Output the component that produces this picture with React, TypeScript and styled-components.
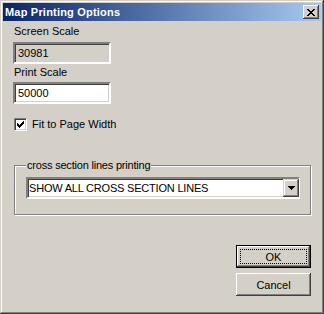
import styled, { createGlobalStyle } from 'styled-components';

const GlobalStyle = createGlobalStyle`
  html, body {
    margin: 0;
    padding: 0;
    background: #d4d0c8;
  }
  body {
    font-family: "Liberation Sans", Arial, sans-serif;
    font-size: 11px;
    color: #000;
  }
`;

const Window = styled.div`
  width: 324px;
  height: 314px;
  box-sizing: border-box;
  padding: 3px;
  background: #d4d0c8;
  display: flex;
  flex-direction: column;
  box-shadow:
    inset -1px -1px 0 #404040,
    inset 1px 1px 0 #d4d0c8,
    inset -2px -2px 0 #808080,
    inset 2px 2px 0 #ffffff;
`;

const TitleBar = styled.div`
  height: 18px;
  display: flex;
  align-items: center;
  justify-content: space-between;
  padding: 0 2px 0 2px;
  background: linear-gradient(to right, #0a246a, #a6caf0);
`;

const Title = styled.span`
  color: #fff;
  font-weight: bold;
  font-size: 11px;
  letter-spacing: 0.2px;
`;

const CloseButton = styled.div`
  width: 16px;
  height: 14px;
  box-sizing: border-box;
  background: #d4d0c8;
  display: flex;
  align-items: center;
  justify-content: center;
  box-shadow:
    inset -1px -1px 0 #404040,
    inset 1px 1px 0 #ffffff,
    inset -2px -2px 0 #808080;
`;

const Body = styled.div`
  flex: 1;
  display: flex;
  flex-direction: column;
  align-items: flex-start;
  padding: 4px 10px 0 10px;
`;

const Label = styled.div<{ $gap?: number }>`
  line-height: 13px;
  margin: ${({ $gap }) => $gap ?? 0}px 0 0 1px;
`;

const EditBox = styled.div<{ $disabled?: boolean; $gap?: number }>`
  width: 98px;
  height: 22px;
  box-sizing: border-box;
  margin-top: ${({ $gap }) => $gap ?? 0}px;
  padding: 0 3px;
  border: 2px solid;
  border-color: #808080 #ffffff #ffffff #808080;
  box-shadow: inset 1px 1px 0 #404040, inset -1px -1px 0 #d4d0c8;
  background: ${({ $disabled }) => ($disabled ? '#d4d0c8' : '#ffffff')};
  display: flex;
  align-items: center;
`;

const CheckRow = styled.label`
  display: flex;
  align-items: center;
  gap: 5px;
  margin: 14px 0 0 1px;
  line-height: 13px;
`;

const CheckBox = styled.span`
  width: 13px;
  height: 13px;
  box-sizing: border-box;
  border: 1px solid;
  border-color: #808080 #ffffff #ffffff #808080;
  box-shadow: inset 1px 1px 0 #404040, inset -1px -1px 0 #d4d0c8;
  background: #fff;
  display: flex;
  align-items: center;
  justify-content: center;
`;

const Group = styled.fieldset`
  align-self: stretch;
  margin: 28px 0 0 1px;
  padding: 5px 10px 15px 11px;
  border: 1px solid #808080;
  box-shadow: 1px 1px 0 #ffffff, inset 1px 1px 0 #ffffff;
  min-width: 0;
`;

const Legend = styled.legend`
  padding: 0 1px;
  margin-left: 0;
  line-height: 13px;
  letter-spacing: -0.2px;
  background: #d4d0c8;
`;

const Combo = styled.div`
  height: 22px;
  box-sizing: border-box;
  border: 2px solid;
  border-color: #808080 #ffffff #ffffff #808080;
  box-shadow: inset 1px 1px 0 #404040, inset -1px -1px 0 #d4d0c8;
  background: #fff;
  display: flex;
  align-items: center;
  justify-content: space-between;
  padding: 0 0 0 1px;
`;

const ComboText = styled.span`
  letter-spacing: -0.2px;
`;

const ComboArrow = styled.span`
  width: 16px;
  height: 18px;
  margin-right: -1px;
  box-sizing: border-box;
  background: #d4d0c8;
  display: flex;
  align-items: center;
  justify-content: center;
  box-shadow:
    inset -1px -1px 0 #404040,
    inset 1px 1px 0 #d4d0c8,
    inset -2px -2px 0 #808080,
    inset 2px 2px 0 #ffffff;
`;

const ButtonColumn = styled.div`
  align-self: flex-end;
  display: flex;
  flex-direction: column;
  gap: 5px;
  margin-top: 30px;
`;

const Button = styled.button<{ $default?: boolean }>`
  position: relative;
  width: 75px;
  height: 23px;
  box-sizing: border-box;
  margin: 0;
  padding: 0;
  font-family: inherit;
  font-size: 11px;
  color: #000;
  background: #d4d0c8;
  border: ${({ $default }) => ($default ? '1px solid #000' : 'none')};
  box-shadow:
    inset -1px -1px 0 #404040,
    inset 1px 1px 0 #ffffff,
    inset -2px -2px 0 #808080;

  &::after {
    content: '';
    display: ${({ $default }) => ($default ? 'block' : 'none')};
    position: absolute;
    inset: 3px;
    border: 1px dotted #000;
  }
`;

const Pixels = ({ rows, w, h }: { rows: string[]; w: number; h: number }) => (
  <svg width={w} height={h} viewBox={`0 0 ${w} ${h}`} shapeRendering="crispEdges">
    {rows.flatMap((row, y) =>
      row.split('').map((c, x) => (c === 'X' ? <rect key={`${x}-${y}`} x={x} y={y} width={1} height={1} fill="#000" /> : null))
    )}
  </svg>
);

const closeGlyph = ['XX....XX', '.XX..XX.', '..XXXX..', '...XX...', '..XXXX..', '.XX..XX.', 'XX....XX'];
const checkGlyph = ['......X', '.....XX', 'X...XXX', 'XX.XXX.', 'XXXXX..', '.XXX...', '..X....'];
const arrowGlyph = ['XXXXXXX', '.XXXXX.', '..XXX..', '...X...'];

export default function App() {
  return (
    <>
      <GlobalStyle />
      <Window>
        <TitleBar>
          <Title>Map Printing Options</Title>
          <CloseButton>
            <Pixels rows={closeGlyph} w={8} h={7} />
          </CloseButton>
        </TitleBar>
        <Body>
          <Label>Screen Scale</Label>
          <EditBox $disabled $gap={4}>30981</EditBox>
          <Label $gap={2}>Print Scale</Label>
          <EditBox $gap={3}>50000</EditBox>
          <CheckRow>
            <CheckBox>
              <Pixels rows={checkGlyph} w={7} h={7} />
            </CheckBox>
            Fit to Page Width
          </CheckRow>
          <Group>
            <Legend>cross section lines printing</Legend>
            <Combo>
              <ComboText>SHOW ALL CROSS SECTION LINES</ComboText>
              <ComboArrow>
                <Pixels rows={arrowGlyph} w={7} h={4} />
              </ComboArrow>
            </Combo>
          </Group>
          <ButtonColumn>
            <Button $default>OK</Button>
            <Button>Cancel</Button>
          </ButtonColumn>
        </Body>
      </Window>
    </>
  );
}
